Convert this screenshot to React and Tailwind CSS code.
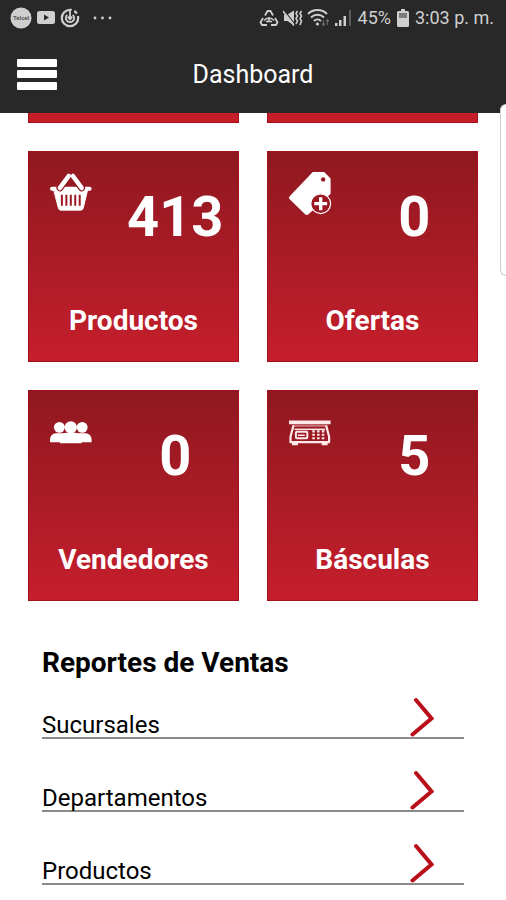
import React from 'react';

const BasketIcon = () => (
  <svg viewBox="0 0 42 42" className="w-full" fill="none" stroke="white" strokeLinecap="round" strokeLinejoin="round">
    <path d="M2 17h38" strokeWidth="4" />
    <path d="M4 18h34l-4.500 18.500a2.500 2.500 0 0 1-2.500 2H11a2.500 2.500 0 0 1-2.500-2z" fill="white" strokeWidth="1" />
    <path d="M10 16L19 4M32 16L23 4" stroke="#951820" strokeWidth="7" />
    <path d="M10 16L19 4M32 16L23 4" strokeWidth="4.500" />
    <path d="M12 23v11M16.500 23v11M21 23v11M25.500 23v11M30 23v11" stroke="#9c1822" strokeWidth="2" strokeLinecap="butt" />
  </svg>
);

const TagIcon = () => (
  <svg viewBox="0 0 42 42" className="w-full overflow-visible" fill="none">
    <path d="M24 0h11.500L42 6.500V22L20 42.500a3 3 0 0 1-4 0L.700 27.500a2 2 0 0 1 0-3z" fill="white" />
    <circle cx="34.500" cy="7.500" r="2.200" fill="#951820" />
    <circle cx="32" cy="32" r="10" fill="#9c1822" stroke="white" strokeWidth="1.200" />
    <path d="M32 25.500v13M25.500 32h13" stroke="white" strokeWidth="3.400" />
  </svg>
);

const PeopleIcon = () => (
  <svg viewBox="0 0 42 42" className="w-full" fill="white">
    <circle cx="9.500" cy="16.500" r="5.500" />
    <circle cx="32.500" cy="16.500" r="5.500" />
    <path d="M0 31.500v-3a6 6 0 0 1 6-6h30a6 6 0 0 1 6 6v3z" />
    <circle cx="21" cy="16.500" r="6.200" />
    <path d="M10 32.500v-4a6.500 6.500 0 0 1 6.500-6.500h9a6.500 6.500 0 0 1 6.500 6.500v4z" />
  </svg>
);

const ScaleIcon = () => (
  <svg viewBox="0 0 42 42" className="w-full" fill="none" stroke="#ffe9e9" strokeLinejoin="round">
    <path d="M0 11.500h42" strokeWidth="4" />
    <path d="M4 15h34" stroke="#c9787c" strokeWidth="2" />
    <path d="M4.500 14.500L1.500 26v5.500h39V26l-3-11.500" strokeWidth="2.200" />
    <path d="M5.500 18.500h31" strokeWidth="1.500" />
    <path d="M3 33h6M33 33h6" strokeWidth="3" />
    <rect x="7" y="21" width="11.500" height="6.500" rx="1" strokeWidth="2" />
    <path d="M9 24.500h7" strokeWidth="1.500" />
    <path d="M23.500 20.500h12.500M23.500 24h12.500M23.500 27.500h12.500" strokeWidth="2.200" strokeDasharray="2.600 2.200" />
  </svg>
);

const MenuIcon = () => (
  <svg width="42" height="36" viewBox="0 0 42 36" fill="white">
    <rect x="1" y="2" width="40" height="8" rx="1" />
    <rect x="1" y="13" width="40" height="8" rx="1" />
    <rect x="1" y="25" width="40" height="8" rx="1" />
  </svg>
);

const ChevronIcon = () => (
  <svg width="24" height="40" viewBox="0 0 24 40" fill="none" stroke="#b80f1a" strokeWidth="4" strokeLinecap="round">
    <path d="M6 3L21.500 21.500L2.500 37.500" />
  </svg>
);

const StatusBar = () => (
  <div className="flex h-9 items-center justify-between pr-3 pl-2.5 text-[#cfcfcf]">
    <div className="flex items-center gap-1">
      <svg width="22" height="22" viewBox="0 0 22 22">
        <circle cx="11" cy="11" r="10.500" fill="#cfcfcf" />
        <text x="11" y="13" fontSize="6" fontWeight="bold" textAnchor="middle" fill="#555">Telcel</text>
      </svg>
      <svg width="20" height="16" viewBox="0 0 20 16">
        <rect x="1" y="1" width="18" height="13" rx="2.500" fill="#cfcfcf" />
        <path d="M8 4.500l5 3-5 3z" fill="#282828" />
      </svg>
      <svg width="20" height="20" viewBox="0 0 22 22" fill="none" stroke="#cfcfcf">
        <circle cx="11" cy="11" r="9" strokeWidth="2.500" strokeDasharray="44 3 4 3" />
        <path d="M8 7.500a4.600 4.600 0 1 0 6 0" strokeWidth="2" />
        <path d="M11 2v9M8.500 9.500l2.500 3 2.500-3" strokeWidth="2" />
      </svg>
      <svg width="22" height="6" viewBox="0 0 22 6" fill="#cfcfcf" className="ml-2">
        <circle cx="3" cy="3" r="1.400" />
        <circle cx="10.500" cy="3" r="1.400" />
        <circle cx="18" cy="3" r="1.400" />
      </svg>
    </div>
    <div className="flex items-center gap-1.5">
      <div className="flex items-center gap-1">
        <svg width="20" height="18" viewBox="0 0 20 18" fill="none" stroke="#cfcfcf" strokeWidth="1.800" strokeLinejoin="round">
          <path d="M6 6.500L8.500 2h3L14 6.500M16 9l2.500 4.500L17 16h-5M8 16H3l-1.500-2.500L4 9" />
          <path d="M5 11.500l2.500-2h5l2.500 2M7 12.500h6M10 8v5" strokeWidth="1.500" />
        </svg>
        <svg width="20" height="18" viewBox="0 0 20 18" fill="none" stroke="#cfcfcf">
          <path d="M1 5.500h3.500L11 1.500v15L4.500 12H1z" fill="#cfcfcf" stroke="none" />
          <path d="M1 1l11.500 15" stroke="#282828" strokeWidth="1.200" />
          <path d="M0 2l11 14.500" strokeWidth="1.500" />
          <path d="M14.500 2l-1.500 2.500 1.500 2.500-1.500 2.500 1.500 2.500-1.500 3M18.500 2L17 4.500 18.500 7 17 9.500l1.500 2.500L17 16" strokeWidth="1.600" />
        </svg>
        <svg width="23" height="20" viewBox="0 0 23 20" fill="none" stroke="#cfcfcf" strokeWidth="2">
          <path d="M1 6a13.500 13.500 0 0 1 19 0M4 9.500a9.300 9.300 0 0 1 13 0M7 13a5 5 0 0 1 7 0" />
          <circle cx="10.500" cy="16" r="1.600" fill="#cfcfcf" stroke="none" />
          <path d="M16.500 12v5M15 15.500l1.500 2 1.500-2M20.500 17v-5M19 13.500l1.500-2 1.500 2" stroke="#666" strokeWidth="1.200" />
        </svg>
        <svg width="18" height="18" viewBox="0 0 18 18" fill="#cfcfcf">
          <rect x="1" y="14" width="2.500" height="3" />
          <rect x="5" y="11" width="2.500" height="6" />
          <rect x="9.500" y="7" width="2.500" height="10" />
          <rect x="15" y="1" width="2" height="16" fill="#5c5c5c" />
        </svg>
      </div>
      <span className="text-lg leading-5">45%</span>
      <svg width="12" height="20" viewBox="0 0 12 20">
        <path d="M4 1h4v2h2.500A1.500 1.500 0 0 1 12 4.500v13a1.500 1.500 0 0 1-1.500 1.500h-9A1.500 1.500 0 0 1 0 17.500v-13A1.500 1.500 0 0 1 1.500 3H4z" fill="#cfcfcf" />
        <rect x="2" y="5" width="8" height="5" fill="#7b7b7b" />
      </svg>
      <span className="text-lg leading-5">3:03 p. m.</span>
    </div>
  </div>
);

const cards = [
  { label: 'Productos', value: 413, Icon: BasketIcon },
  { label: 'Ofertas', value: 0, Icon: TagIcon },
  { label: 'Vendedores', value: 0, Icon: PeopleIcon },
  { label: 'Básculas', value: 5, Icon: ScaleIcon }
];

const reports = ['Sucursales', 'Departamentos', 'Productos'];

const StatCard = ({ label, value, Icon }) => (
  <a
    href="#"
    className="flex aspect-square flex-col justify-between border border-[#a1101b] bg-linear-to-b from-[#8f1820] to-[#c61e2c] pt-5 pb-6 text-white"
  >
    <div className="flex items-start">
      <div className="w-2/5 px-[21px]">
        <Icon />
      </div>
      <span className="w-3/5 pt-4 text-center text-[56px] leading-[58px] font-bold">{value}</span>
    </div>
    <span className="text-center text-[28px] leading-8 font-bold">{label}</span>
  </a>
);

const App = () => {
  return (
    <div className="relative min-h-screen overflow-hidden bg-white font-[Roboto,sans-serif] text-black">
      <header className="bg-[#282828] text-white">
        <StatusBar />
        <div className="grid h-[77px] grid-cols-[1fr_auto_1fr] items-center px-4">
          <button type="button" aria-label="Menú" className="justify-self-start">
            <MenuIcon />
          </button>
          <h1 className="text-[25px] leading-8">Dashboard</h1>
        </div>
      </header>

      <main className="px-7">
        {/* Bottom edge of the row scrolled under the header */}
        <div className="mb-7 grid grid-cols-2 gap-7">
          <div className="h-2.5 border border-t-0 border-[#a1101b] bg-[#c61e28]"></div>
          <div className="h-2.5 border border-t-0 border-[#a1101b] bg-[#c61e28]"></div>
        </div>

        <div className="grid grid-cols-2 gap-7">
          {cards.map(card => (
            <StatCard key={card.label} {...card} />
          ))}
        </div>

        <section className="px-3.5 pt-[46px] pb-4">
          <h2 className="text-[28px] leading-8 font-bold">Reportes de Ventas</h2>
          <ul className="flex flex-col gap-7 pt-[15px]">
            {reports.map(report => (
              <li key={report}>
                <a href="#" className="flex h-[45px] items-end justify-between border-b-2 border-[#8a8a8a] pr-[30px]">
                  <span className="text-2xl leading-6">{report}</span>
                  <ChevronIcon />
                </a>
              </li>
            ))}
          </ul>
        </section>
      </main>

      {/* Edge panel handle */}
      <div className="absolute top-26 right-0 h-43 w-1.5 rounded-l-md border border-r-0 border-[#cfcfcf] bg-white"></div>
    </div>
  );
};

export default App;
